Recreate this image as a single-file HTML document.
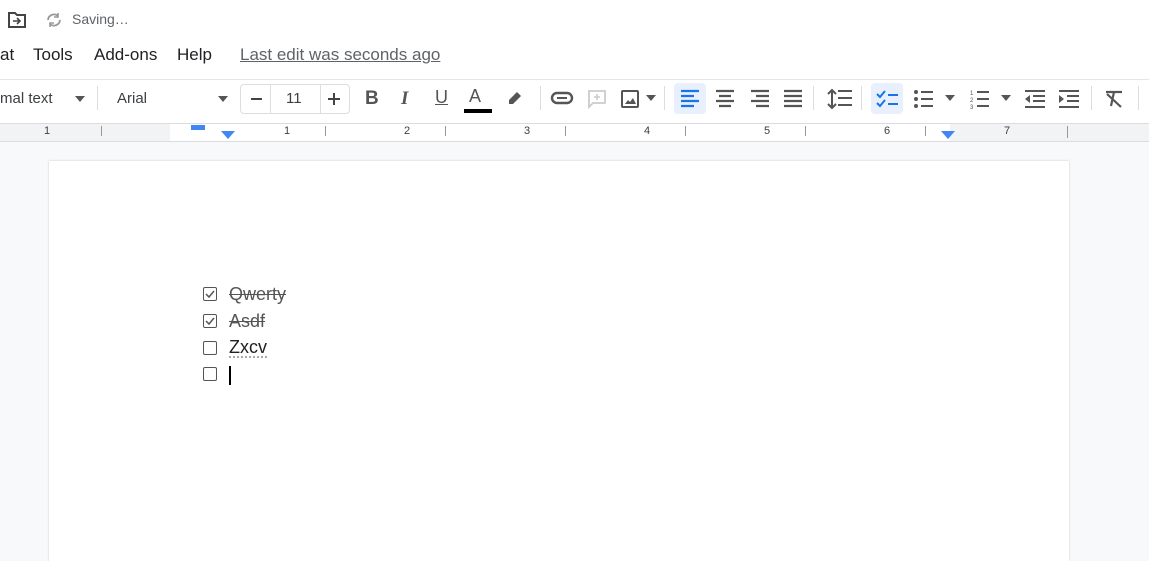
<!DOCTYPE html>
<html><head><style>
body{margin:0;width:1149px;height:546px;overflow:hidden;background:#f8f9fa;font-family:"Liberation Sans",Arial,sans-serif;position:relative}
.a{position:absolute}
.top{left:0;top:0;width:1149px;height:123px;background:#fff}
.ic{position:absolute;fill:#444746}
.ruler{left:0;top:123px;width:1149px;height:17px;background:#fff;border-top:1px solid #dadce0;border-bottom:1px solid #dadce0}
.num{position:absolute;top:2px;font-size:11px;color:#3c4043}
.tk{position:absolute;width:1px;background:#999}
.cb{position:absolute;left:203px;width:12px;height:12px;border:1.6px solid #555;border-radius:2px}
.t{position:absolute;left:229px;font-size:18px;color:#202124}
</style></head><body>
<div class="a top"></div>
<svg class="ic" style="left:7px;top:11px" width="20" height="18" viewBox="0 0 20 18"><path d="M2 2h6l2 2h8v12H2z" fill="none" stroke="#444" stroke-width="2"/><path d="M6 10h6M10 7l3 3-3 3" fill="none" stroke="#444" stroke-width="1.6"/></svg>
<svg class="a" style="left:44px;top:11px" width="20" height="18" viewBox="0 0 20 18"><path d="M4 9a6 6 0 0 1 10-4M16 9a6 6 0 0 1-10 4" fill="none" stroke="#999" stroke-width="1.8"/><path d="M14 2v4h-4M6 16v-4h4" fill="none" stroke="#999" stroke-width="1.6"/></svg>
<div class="a" style="left:72px;top:11px;font-size:14px;color:#5f6368">Saving…</div>
<div class="a" style="left:0;top:45px;font-size:17px;color:#202124">at</div>
<div class="a" style="left:33px;top:45px;font-size:17px;color:#202124">Tools</div>
<div class="a" style="left:94px;top:45px;font-size:17px;color:#202124">Add-ons</div>
<div class="a" style="left:177px;top:45px;font-size:17px;color:#202124">Help</div>
<div class="a" style="left:240px;top:45px;font-size:17px;color:#5f6368;text-decoration:underline">Last edit was seconds ago</div>
<div class="a" style="left:0;top:79px;width:1149px;height:1px;background:#e5e5e5"></div>
<div class="a" style="left:0;top:90px;font-size:15px;color:#3c4043">mal text</div>
<svg class="a" style="left:74px;top:96px" width="12" height="6"><path d="M1 0h10L6 6z" fill="#555"/></svg>
<div class="a" style="left:97px;top:86px;width:1px;height:24px;background:#ddd"></div>
<div class="a" style="left:117px;top:90px;font-size:15px;color:#3c4043">Arial</div>
<svg class="a" style="left:217px;top:96px" width="12" height="6"><path d="M1 0h10L6 6z" fill="#555"/></svg>
<div class="a" style="left:240px;top:84px;width:108px;height:28px;border:1px solid #ddd;border-radius:4px;background:#fff"></div>
<div class="a" style="left:251px;top:98px;width:11px;height:2px;background:#444"></div>
<div class="a" style="left:270px;top:85px;width:1px;height:29px;background:#ddd"></div>
<div class="a" style="left:286px;top:90px;font-size:15px;color:#3c4043">11</div>
<div class="a" style="left:320px;top:85px;width:1px;height:29px;background:#ddd"></div>
<div class="a" style="left:328px;top:98px;width:12px;height:2px;background:#444"></div>
<div class="a" style="left:333px;top:93px;width:2px;height:12px;background:#444"></div>
<div class="a" style="left:365px;top:88px;font-size:19px;font-weight:bold;color:#555">B</div>
<div class="a" style="left:401px;top:88px;font-size:19px;font-style:italic;color:#555;font-family:'Liberation Serif',serif;font-weight:bold">I</div>
<div class="a" style="left:435px;top:87px;font-size:18px;color:#555;text-decoration:underline">U</div>
<div class="a" style="left:469px;top:86px;font-size:18px;color:#555">A</div>
<div class="a" style="left:464px;top:109px;width:28px;height:4px;background:#000"></div>
<svg class="a" style="left:505px;top:88px" width="20" height="18"><path d="M4 12l8-8 4 4-8 8H4z M2 16h4" fill="#555"/></svg>
<div class="a" style="left:540px;top:86px;width:1px;height:24px;background:#ddd"></div>
<svg class="a" style="left:550px;top:90px" width="24" height="16"><rect x="2" y="3" width="20" height="10" rx="5" fill="none" stroke="#555" stroke-width="2.4"/><rect x="8" y="6" width="8" height="4" fill="#fff"/><rect x="7" y="7" width="10" height="2" fill="#555"/></svg>
<svg class="a" style="left:587px;top:89px" width="20" height="20"><path d="M2 2h16v12H6l-4 4z" fill="none" stroke="#ccc" stroke-width="1.8"/><path d="M10 5v6M7 8h6" stroke="#ccc" stroke-width="1.6"/></svg>
<svg class="a" style="left:620px;top:89px" width="20" height="20"><rect x="2" y="2" width="16" height="16" rx="1" fill="none" stroke="#555" stroke-width="2"/><path d="M5 15l3-4 2 2 3-4 3 6z" fill="#555"/></svg>
<svg class="a" style="left:645px;top:95px" width="12" height="6"><path d="M1 0h10L6 6z" fill="#555"/></svg>
<div class="a" style="left:664px;top:86px;width:1px;height:24px;background:#ddd"></div>
<div class="a" style="left:674px;top:83px;width:32px;height:31px;border-radius:4px;background:#e8f0fe"></div>
<svg class="a" style="left:680px;top:89px" width="20" height="20"><path d="M1 2h18M1 7h13M1 12h18M1 17h13" stroke="#1a73e8" stroke-width="2.2"/></svg>
<svg class="a" style="left:715px;top:89px" width="20" height="20"><path d="M1 2h18M4 7h12M1 12h18M4 17h12" stroke="#555" stroke-width="2.2"/></svg>
<svg class="a" style="left:750px;top:89px" width="20" height="20"><path d="M1 2h18M6 7h13M1 12h18M6 17h13" stroke="#555" stroke-width="2.2"/></svg>
<svg class="a" style="left:783px;top:89px" width="20" height="20"><path d="M1 2h18M1 7h18M1 12h18M1 17h18" stroke="#555" stroke-width="2.2"/></svg>
<div class="a" style="left:813px;top:86px;width:1px;height:24px;background:#ddd"></div>
<svg class="a" style="left:827px;top:88px" width="26" height="22"><path d="M5 2v18M1 6l4-4 4 4M1 16l4 4 4-4M11 3h14M11 10h14M11 17h14" fill="none" stroke="#555" stroke-width="2"/></svg>
<div class="a" style="left:861px;top:86px;width:1px;height:24px;background:#ddd"></div>
<div class="a" style="left:871px;top:83px;width:32px;height:31px;border-radius:4px;background:#e8f0fe"></div>
<svg class="a" style="left:876px;top:89px" width="24" height="20"><path d="M1 5l3 3 5-6M1 14l3 3 5-6M12 6h10M12 15h10" fill="none" stroke="#1a73e8" stroke-width="2"/></svg>
<svg class="a" style="left:913px;top:89px" width="22" height="20"><circle cx="3" cy="3" r="2" fill="#555"/><circle cx="3" cy="10" r="2" fill="#555"/><circle cx="3" cy="17" r="2" fill="#555"/><path d="M8 3h12M8 10h12M8 17h12" stroke="#555" stroke-width="2"/></svg>
<svg class="a" style="left:944px;top:95px" width="12" height="6"><path d="M1 0h10L6 6z" fill="#555"/></svg>
<svg class="a" style="left:970px;top:89px" width="22" height="20"><text x="0" y="6" font-size="6" fill="#555">1</text><text x="0" y="13" font-size="6" fill="#555">2</text><text x="0" y="20" font-size="6" fill="#555">3</text><path d="M7 3h12M7 10h12M7 17h12" stroke="#555" stroke-width="2"/></svg>
<svg class="a" style="left:1000px;top:95px" width="12" height="6"><path d="M1 0h10L6 6z" fill="#555"/></svg>
<svg class="a" style="left:1024px;top:89px" width="22" height="20"><path d="M1 2h20M9 7h12M9 12h12M1 18h20" stroke="#555" stroke-width="2"/><path d="M6 6v8L1 10z" fill="#555"/></svg>
<svg class="a" style="left:1058px;top:89px" width="22" height="20"><path d="M1 2h20M9 7h12M9 12h12M1 18h20" stroke="#555" stroke-width="2"/><path d="M1 6v8l5-4z" fill="#555"/></svg>
<div class="a" style="left:1091px;top:86px;width:1px;height:24px;background:#ddd"></div>
<svg class="a" style="left:1104px;top:89px" width="22" height="20"><path d="M2 3h16M10 3L7 17M3 5l14 13" stroke="#555" stroke-width="2.2" fill="none"/></svg>
<div class="a" style="left:1138px;top:86px;width:1px;height:24px;background:#ddd"></div>

<div class="a ruler"></div>
<div class="a" style="left:0;top:124px;width:170px;height:17px;background:#f1f3f4"></div>
<div class="a" style="left:950px;top:124px;width:199px;height:17px;background:#f1f3f4"></div>
<div class="num" style="left:44px;top:125px">1</div>
<div class="num" style="left:284px;top:125px">1</div>
<div class="num" style="left:404px;top:125px">2</div>
<div class="num" style="left:524px;top:125px">3</div>
<div class="num" style="left:644px;top:125px">4</div>
<div class="num" style="left:764px;top:125px">5</div>
<div class="num" style="left:884px;top:125px">6</div>
<div class="num" style="left:1004px;top:125px">7</div>
<div class="tk" style="left:101px;top:126px;height:10px"></div>
<div class="tk" style="left:325px;top:126px;height:10px"></div>
<div class="tk" style="left:445px;top:126px;height:10px"></div>
<div class="tk" style="left:565px;top:126px;height:10px"></div>
<div class="tk" style="left:685px;top:126px;height:10px"></div>
<div class="tk" style="left:805px;top:126px;height:10px"></div>
<div class="tk" style="left:925px;top:126px;height:10px"></div>
<div class="tk" style="left:1067px;top:126px;height:12px"></div>
<div class="a" style="left:191px;top:125px;width:14px;height:5px;background:#4285f4"></div>
<svg class="a" style="left:221px;top:131px" width="14" height="8"><path d="M0 0h14L7 8z" fill="#4285f4"/></svg>
<svg class="a" style="left:941px;top:131px" width="14" height="8"><path d="M0 0h14L7 8z" fill="#4285f4"/></svg>

<div class="a" style="left:49px;top:161px;width:1020px;height:400px;background:#fff;box-shadow:0 0 2px rgba(0,0,0,.2)"></div>
<div class="cb" style="top:287px"><svg width="12" height="12" style="position:absolute;left:0;top:0"><path d="M2 6l3 3 5-6" fill="none" stroke="#555" stroke-width="1.5"/></svg></div>
<div class="cb" style="top:314px"><svg width="12" height="12" style="position:absolute;left:0;top:0"><path d="M2 6l3 3 5-6" fill="none" stroke="#555" stroke-width="1.5"/></svg></div>
<div class="cb" style="top:341px"></div>
<div class="cb" style="top:367px"></div>
<div class="t" style="top:284px;color:#555;text-decoration:line-through">Qwerty</div>
<div class="t" style="top:311px;color:#555;text-decoration:line-through">Asdf</div>
<div class="t" style="top:338px;border-bottom:2px dotted #aaa;line-height:18px">Zxcv</div>
<div class="a" style="left:229px;top:366px;width:2px;height:19px;background:#000"></div>
</body></html>
